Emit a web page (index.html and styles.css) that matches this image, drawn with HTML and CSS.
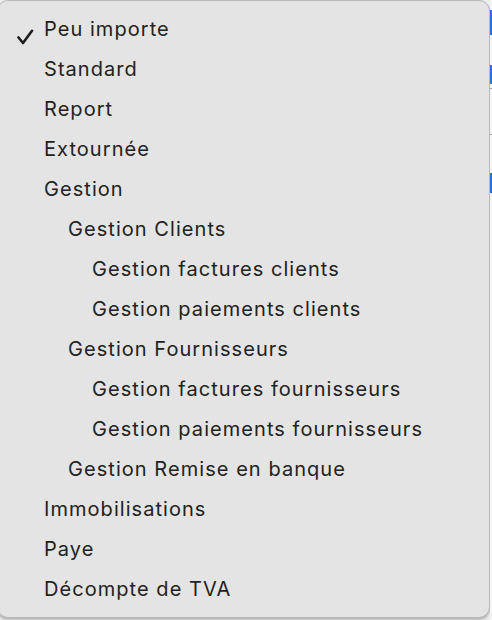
FILE: index.html
```html
<!DOCTYPE html>
<html lang="fr">
<head>
    <meta charset="UTF-8">
    <title>Type d'écriture</title>
    <link rel="stylesheet" href="styles.css">
</head>
<body>
<div class="screen">
    <ul class="menu">
        <li class="item checked">
            <svg class="check" width="18" height="18" viewBox="0 0 18 18"><path d="M1.5 8.5 L6 14 L15 1.8" fill="none" stroke="#1e1e1e" stroke-width="2.6" stroke-linecap="round" stroke-linejoin="round"/></svg>Peu importe
        </li>
        <li class="item">Standard</li>
        <li class="item">Report</li>
        <li class="item">Extournée</li>
        <li class="item">Gestion</li>
        <li class="item lvl1">Gestion Clients</li>
        <li class="item lvl2">Gestion factures clients</li>
        <li class="item lvl2">Gestion paiements clients</li>
        <li class="item lvl1">Gestion Fournisseurs</li>
        <li class="item lvl2">Gestion factures fournisseurs</li>
        <li class="item lvl2">Gestion paiements fournisseurs</li>
        <li class="item lvl1">Gestion Remise en banque</li>
        <li class="item">Immobilisations</li>
        <li class="item">Paye</li>
        <li class="item">Décompte de TVA</li>
    </ul>
    <div class="behind">
        <span class="mark blue b1"></span>
        <span class="mark blue b2"></span>
        <span class="mark line l1"></span>
        <span class="mark line l2"></span>
        <span class="mark blue b3"></span>
    </div>
</div>
</body>
</html>
```

FILE: styles.css
```css
*{
    padding: 0;
    margin: 0;
    box-sizing: border-box;
}
body{
    width: 492px;
    height: 620px;
    overflow: hidden;
    background: #eeeeee;
    font-family: Inter, "Liberation Sans", sans-serif;
}
.screen{
    display: flex;
    align-items: flex-start;
    margin-left: -3px;
}
.menu{
    list-style: none;
    width: 493px;
    height: 618px;
    padding: 8px 0 10px;
    background: #e3e4e3;
    border: 1px solid #b9b9b9;
    border-radius: 11px;
    box-shadow: 0 2px 3px rgba(0,0,0,.25);
}
.item{
    height: 40px;
    line-height: 40px;
    padding-left: 46px;
    font-size: 20px;
    letter-spacing: 1.05px;
    color: #222222;
    position: relative;
    white-space: nowrap;
}
.lvl1{
    padding-left: 70px;
}
.lvl2{
    padding-left: 94px;
}
.check{
    position: absolute;
    left: 19px;
    top: 20px;
}
.behind{
    width: 2px;
    display: flex;
    flex-direction: column;
    background: #f4f4f4;
    height: 620px;
}
.mark{
    display: block;
}
.blue{
    background: #2f6fd6;
}
.line{
    background: #a0a0a0;
}
.b1{
    margin-top: 10px;
    height: 25px;
}
.b2{
    margin-top: 30px;
    height: 19px;
}
.l1{
    margin-top: 4px;
    height: 1px;
}
.l2{
    margin-top: 45px;
    height: 1px;
}
.b3{
    margin-top: 38px;
    height: 20px;
}
```
